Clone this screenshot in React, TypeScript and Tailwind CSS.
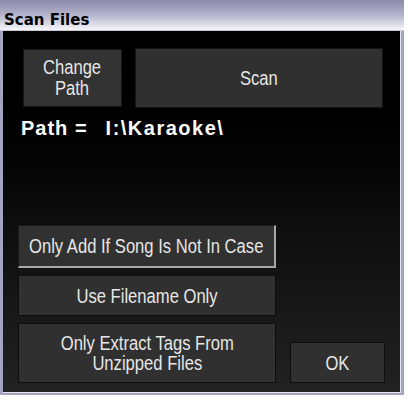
import React from "react";

const btnFont = { fontFamily: '"Liberation Sans", Arial, sans-serif' };

function Btn({ className, children }: { className: string; children: React.ReactNode }) {
  return (
    <div
      className={`flex items-center justify-center text-center text-[20px] leading-[20px] text-[#e6e6e6] bg-[#303030] ${className}`}
      style={btnFont}
    >
      <span className="inline-block scale-x-[0.83] whitespace-nowrap">{children}</span>
    </div>
  );
}

export default function App() {
  return (
    <div className="w-[408px] h-[400px] bg-white">
      <div className="w-[404px] h-[395px] flex flex-col bg-[#a4a4c2] pl-[3px] pr-[3px] pb-[2px]">
        <div className="h-[31px] -mx-[3px] px-[4px] pt-[7px] bg-gradient-to-b from-[#8a8aaa] via-[#b4b4cc] to-[#f6f6fa] border-b border-[#c8c8d4]">
          <span
            className="text-[15px] leading-[15px] font-bold text-black"
            style={{ fontFamily: '"DejaVu Sans", sans-serif' }}
          >
            Scan Files
          </span>
        </div>
        <div className="flex-1 flex flex-col bg-gradient-to-b from-[#000000] via-[#0c0c0c] to-[#222222] border-r border-[#e4e4ee] border-b">
          <div className="flex items-start mt-[17px]">
            <Btn className="ml-[20px] mt-[1px] w-[99px] h-[58px] border border-[#151515] bg-[#333333] leading-[21px]">
              Change
              <br />
              Path
            </Btn>
            <Btn className="ml-[13px] w-[248px] h-[60px] border border-[#151515] bg-[#2f2f2f]">Scan</Btn>
          </div>
          <div
            className="mt-[10px] ml-[18px] text-[20px] leading-[20px] font-bold text-white flex"
            style={{ fontFamily: '"Liberation Sans", Arial, sans-serif' }}
          >
            <span className="tracking-[1px]">Path =</span>
            <span className="ml-[18px] tracking-[1.5px]">I:\Karaoke\</span>
          </div>
          <div className="flex mt-[87px]">
            <div className="ml-[15px] w-[258px] flex flex-col gap-[7px]">
              <Btn className="h-[43px] bg-[#313131] border-t border-l border-[#1a1a1a] border-r-2 border-b-2 border-r-[#a8a8a8] border-b-[#a8a8a8]">
                Only Add If Song Is Not In Case
              </Btn>
              <Btn className="h-[41px] bg-[#2d2d2d] border border-[#0e0e0e]">Use Filename Only</Btn>
              <Btn className="h-[60px] bg-[#2d2d2d] border border-[#0e0e0e]">
                Only Extract Tags From
                <br />
                Unzipped Files
              </Btn>
            </div>
            <Btn className="ml-[14px] self-end w-[95px] h-[41px] bg-[#2d2d2d] border border-[#0e0e0e]">OK</Btn>
          </div>
        </div>
      </div>
    </div>
  );
}
